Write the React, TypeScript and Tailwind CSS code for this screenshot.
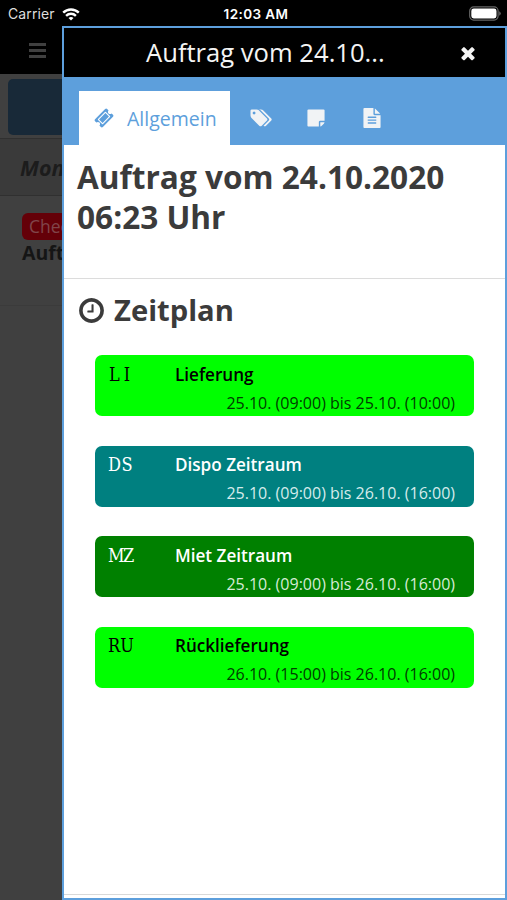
import React from "react";

type IconProps = { d: string; className: string; viewBox?: string };

function Icon({ d, className, viewBox = "0 0 1792 1792" }: IconProps) {
  return (
    <svg viewBox={viewBox} fill="currentColor" className={`block shrink-0 ${className}`} aria-hidden="true">
      <path d={d} />
    </svg>
  );
}

const ticket =
  "M1024 452l316 316-572 572-316-316zm-211 979l618-618q19-19 19-45t-19-45l-362-362q-18-18-45-18t-45 18l-618 618q-19 19-19 45t19 45l362 362q18 18 45 18t45-18zm889-637l-907 908q-37 37-90.5 37t-90.5-37l-126-126q56-56 56-136t-56-136-136-56-136 56l-125-126q-37-37-37-90.5t37-90.5l907-906q37-37 90.5-37t90.5 37l125 125q-56 56-56 136t56 136 136 56 136-56l126 125q37 37 37 90.5t-37 90.5z";
const tags =
  "M576 448q0-53-37.5-90.5t-90.5-37.5-90.5 37.5-37.5 90.5 37.5 90.5 90.5 37.5 90.5-37.5 37.5-90.5zm1067 576q0 53-37 90l-491 492q-39 37-91 37-53 0-90-37l-715-716q-38-37-64.5-101t-26.5-117v-416q0-52 38-90t90-38h416q53 0 117 26.5t102 64.5l715 714q37 39 37 91zm384 0q0 53-37 90l-491 492q-39 37-91 37-36 0-59-14t-53-45l470-470q37-37 37-90 0-52-37-91l-715-714q-38-38-102-64.5t-117-26.5h224q53 0 117 26.5t102 64.5l715 714q37 39 37 91z";
const note =
  "M1152 1248v416h-928q-40 0-68-28t-28-68v-1344q0-40 28-68t68-28h1344q40 0 68 28t28 68v928h-416q-40 0-68 28t-28 68zm128 32h381q-15 82-65 132l-184 184q-50 50-132 65v-381z";
const fileText =
  "M1596 476q14 14 28 36h-472v-472q22 14 36 28zm-476 164h544v1056q0 40-28 68t-68 28h-1344q-40 0-68-28t-28-68v-1600q0-40 28-68t68-28h800v544q0 40 28 68t68 28zm160 736v-64q0-14-9-23t-23-9h-704q-14 0-23 9t-9 23v64q0 14 9 23t23 9h704q14 0 23-9t9-23zm0-256v-64q0-14-9-23t-23-9h-704q-14 0-23 9t-9 23v64q0 14 9 23t23 9h704q14 0 23-9t9-23zm0-256v-64q0-14-9-23t-23-9h-704q-14 0-23 9t-9 23v64q0 14 9 23t23 9h704q14 0 23-9t9-23z";
const clock =
  "M1024 544v448q0 14-9 23t-23 9h-320q-14 0-23-9t-9-23v-64q0-14 9-23t23-9h224v-352q0-14 9-23t23-9h64q14 0 23 9t9 23zm416 352q0-148-73-273t-198-198-273-73-273 73-198 198-73 273 73 273 198 198 273 73 273-73 198-198 73-273zm224 0q0 209-103 385.5t-279.5 279.5-385.5 103-385.5-103-279.5-279.5-103-385.5 103-385.5 279.5-279.5 385.5-103 385.5 103 279.5 279.5 103 385.5z";
const times =
  "M1490 1322q0 40-28 68l-136 136q-28 28-68 28t-68-28l-294-294-294 294q-28 28-68 28t-68-28l-136-136q-28-28-28-68t28-68l294-294-294-294q-28-28-28-68t28-68l136-136q28-28 68-28t68 28l294 294 294-294q28-28 68-28t68 28l136 136q28 28 28 68t-28 68l-294 294 294 294q28 28 28 68z";

const entries = [
  { code: "LI", title: "Lieferung", time: "25.10. (09:00) bis 25.10. (10:00)", box: "bg-[#00ff00] text-black", spacing: "tracking-[4px] pl-px", timeColor: "text-[#003c00]" },
  { code: "DS", title: "Dispo Zeitraum", time: "25.10. (09:00) bis 26.10. (16:00)", box: "bg-[#008080] text-white", spacing: "tracking-[0.5px]", timeColor: "text-[#d5ebeb]" },
  { code: "MZ", title: "Miet Zeitraum", time: "25.10. (09:00) bis 26.10. (16:00)", box: "bg-[#008000] text-white", spacing: "tracking-[-1.5px]", timeColor: "text-[#d5ebd5]" },
  { code: "RU", title: "Rücklieferung", time: "26.10. (15:00) bis 26.10. (16:00)", box: "bg-[#00ff00] text-black", spacing: "tracking-[0px]", timeColor: "text-[#003c00]" },
];

function StatusBar() {
  return (
    <header className="flex h-[26px] items-center justify-between bg-black pl-2 pr-1.5 font-['Inter',sans-serif] text-white">
      <div className="flex flex-1 items-center gap-[7px] pt-0.5">
        <span className="text-[14px] leading-4 tracking-[0.1px] text-[#dedede]">Carrier</span>
        <svg viewBox="0 0 18 13" className="h-[13px] w-[18px]" fill="none" stroke="white" strokeWidth="2.4">
          <path d="M1.2 4.6a11.2 11.2 0 0 1 15.6 0" />
          <path d="M4.1 7.8a7 7 0 0 1 9.8 0" />
          <path d="M6.5 10.1a3.7 3.7 0 0 1 5 0L9 12.6z" fill="white" stroke="none" />
        </svg>
      </div>
      <span className="pl-[3px] pt-0.5 text-[13.5px] font-semibold leading-4 tracking-[0.4px]">12:03 AM</span>
      <div className="flex flex-1 justify-end">
        <svg viewBox="0 0 32 15" className="h-[15px] w-8">
          <rect x=".7" y=".9" width="28.4" height="13.2" rx="4" fill="none" stroke="#666" strokeWidth="1.2" />
          <rect x="2.3" y="2.5" width="25.2" height="10" rx="2.4" fill="white" />
          <path d="M30.2 5.3q1.6.7 1.6 2.2t-1.6 2.2z" fill="#666" />
        </svg>
      </div>
    </header>
  );
}

function OrderList() {
  return (
    <div className="flex w-16 flex-1 flex-col whitespace-nowrap bg-[#404040]">
      <div className="h-12 bg-black pl-[29px] pt-[17px]">
        <div className="flex w-[17px] flex-col gap-[3px]">
          <i className="h-[3px] bg-[#404040]" />
          <i className="h-[3px] bg-[#404040]" />
          <i className="h-[3px] bg-[#404040]" />
        </div>
      </div>
      <div className="h-[65px] border-b border-[#303030] pl-2 pt-[5px]">
        <div className="h-[56px] rounded-l-[5px] bg-[#182938]" />
      </div>
      <div className="flex h-[57px] items-center border-b border-[#303030] bg-[#3a3a3a] pl-5 pt-0.5 text-[21.5px] font-bold italic text-[#1c1c1c]">
        Mon
      </div>
      <div className="h-[110px] border-b border-[#3b3b3b] pl-[22px] pt-[17px]">
        <div className="h-[27px] rounded-l-[6px] bg-[#640008] pl-[7px] text-[17.5px] leading-[27px] text-[#80454a]">
          Chec
        </div>
        <div className="text-[19.5px] font-bold leading-[26px] text-[#151515]">Auft</div>
      </div>
    </div>
  );
}

export default function App() {
  return (
    <div className="relative flex h-[900px] w-[507px] flex-col overflow-hidden bg-black font-['Open_Sans',sans-serif]">
      <StatusBar />
      <OrderList />
      <section className="absolute bottom-0 left-[62px] right-0 top-[26px] flex flex-col border-2 border-[#5d9fdc] bg-white pb-[3px]">
        <div className="flex h-[49px] shrink-0 items-center bg-black pl-[82px] pr-[27px] text-[#f4f4f4]">
          <h1 className="flex-1 whitespace-nowrap pt-px text-[25.6px] leading-8">Auftrag vom 24.10...</h1>
          <Icon d={times} className="h-5 w-5" />
        </div>
        <nav className="flex h-[68px] shrink-0 items-end bg-[#5d9fdc] pl-[15px] text-[#f1f3f5]">
          <div className="flex h-[54px] w-[151px] items-center bg-white pl-[15px] text-[#5d9fdc]">
            <Icon d={ticket} className="h-5 w-5" />
            <span className="pl-[13px] pt-px text-[19.5px]">Allgemein</span>
          </div>
          <div className="flex h-[54px] items-center pl-[19px]">
            <Icon d={tags} viewBox="0 0 2048 1792" className="h-5 w-[23px]" />
            <Icon d={note} className="ml-[34px] h-5 w-5" />
            <Icon d={fileText} className="ml-9 h-5 w-5" />
          </div>
        </nav>
        <main className="flex-1 border-b border-[#d9d9d9] text-[#3b3b3b]">
          <h2 className="h-[134px] whitespace-nowrap border-b border-[#dcdcdc] pl-[13px] pt-3 text-[31.6px] font-bold leading-[39.5px]">
            Auftrag vom 24.10.2020
            <br />
            06:23 Uhr
          </h2>
          <h3 className="flex items-center pl-[13px] pt-3 text-[29.2px] font-bold leading-[38px]">
            <Icon d={clock} className="mr-2 h-[29px] w-[29px]" />
            Zeitplan
          </h3>
          <div className="flex flex-col gap-[29.5px] pl-[30.5px] pr-[31px] pt-[26px]">
            {entries.map((e) => (
              <article key={e.code} className={`h-[61px] rounded-[7px] pl-[13.5px] pr-[19px] pt-[6.5px] ${e.box}`}>
                <div className="flex items-center leading-[26px]">
                  <span className={`w-[67px] font-['DejaVu_Serif_Condensed','DejaVu_Serif',serif] text-[18px] font-stretch-condensed ${e.spacing}`}>
                    {e.code}
                  </span>
                  <span className="text-[17.1px] font-semibold">{e.title}</span>
                </div>
                <div className={`whitespace-nowrap text-right text-[16px] leading-[30px] ${e.timeColor}`}>{e.time}</div>
              </article>
            ))}
          </div>
        </main>
      </section>
    </div>
  );
}
